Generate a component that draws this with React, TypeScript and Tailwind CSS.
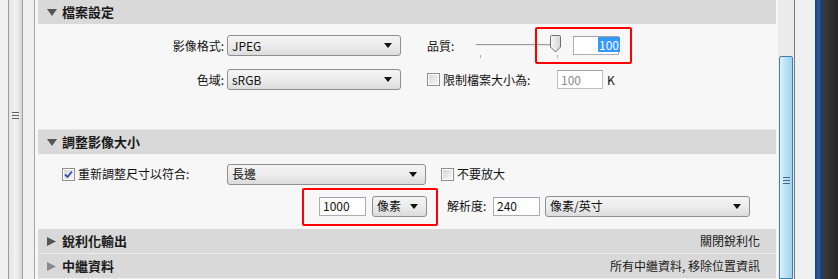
import React from "react";

const FONT = { fontFamily: '"Noto Sans CJK TC", "Noto Sans CJK SC", "Liberation Sans", sans-serif' };

function Select({ value, width }: { value: string; width: string }) {
  return (
    <div
      className={`${width} h-[21px] flex items-center justify-between rounded-[3px] border border-[#8e8f8f] bg-gradient-to-b from-[#f4f4f4] via-[#ececec] to-[#dcdcdc] pl-[4px] pr-[8px] text-[12px] text-[#111]`}
    >
      <span className="leading-none">{value}</span>
      <svg width="8" height="5" viewBox="0 0 8 5">
        <path d="M0 0 L8 0 L4 5 Z" fill="#111" />
      </svg>
    </div>
  );
}

function TextBox({ value, width, className = "" }: { value: string; width: string; className?: string }) {
  return (
    <div
      className={`${width} h-[19px] flex items-center border border-[#abadb3] border-t-[#a0a3aa] bg-white px-[3px] text-[12px] ${className}`}
    >
      {value}
    </div>
  );
}

function Check({ checked = false }: { checked?: boolean }) {
  return (
    <div className="w-[13px] h-[13px] border border-[#8e8f8f] bg-white p-[1px]">
      <div className="w-full h-full bg-gradient-to-br from-[#d8d8d8] to-[#f6f6f6] flex items-center justify-center">
        {checked && (
          <svg width="9" height="9" viewBox="0 0 9 9">
            <path d="M1 4.5 L3.5 7 L8 1.5" stroke="#2a52be" strokeWidth="1.8" fill="none" />
          </svg>
        )}
      </div>
    </div>
  );
}

function Header({ title, open, right, dim }: { title: string; open?: boolean; right?: string; dim?: boolean }) {
  const color = dim ? "#8a8a8a" : "#555555";
  return (
    <div className="h-[24px] bg-[#d9d9d9] flex items-center pl-[9px] pr-[16px] text-[#1a1a1a]">
      <span className="w-[11px] flex items-center">
        {open ? (
          <svg width="10" height="7" viewBox="0 0 10 7">
            <path d="M0 0 H10 L5 7 Z" fill={color} />
          </svg>
        ) : (
          <svg width="9" height="9" viewBox="0 0 9 9">
            <path d="M0 0 L9 4.5 L0 9 Z" fill={color} />
          </svg>
        )}
      </span>
      <span className="ml-[4px] text-[13px] font-bold">{title}</span>
      {right && <span className="ml-auto text-[12px]">{right}</span>}
    </div>
  );
}

function Slider() {
  return (
    <div className="relative w-[90px] h-[30px]">
      <div className="absolute left-[5px] top-[14px] w-[82px] h-[2px] border-t border-[#9a9a9a] border-b-[#ffffff] bg-[#e8e8e8]" />
      <div className="absolute left-[9px] top-[25px] w-px h-[3px] bg-[#b0b0b0]" />
      <div className="absolute left-[86px] top-[25px] w-px h-[3px] bg-[#b0b0b0]" />
      <svg className="absolute left-[79px] top-[5px]" width="11" height="18" viewBox="0 0 11 18">
        <defs>
          <linearGradient id="th" x1="0" x2="1">
            <stop offset="0" stopColor="#f8f8f8" />
            <stop offset="1" stopColor="#d4d4d4" />
          </linearGradient>
        </defs>
        <path d="M1.5 0.5 H9.5 Q10.5 0.5 10.5 1.5 V12 L5.5 17 L0.5 12 V1.5 Q0.5 0.5 1.5 0.5 Z" fill="url(#th)" stroke="#707070" />
      </svg>
    </div>
  );
}

export default function App() {
  return (
    <div className="w-[838px] h-[279px] overflow-hidden flex bg-[#f0f0f0] text-[#111]" style={FONT}>
      {/* left frame */}
      <div className="w-[8px] bg-[#f0f0f0]" />
      <div className="w-px bg-[#9d9d9d]" />
      <div className="w-[13px] bg-gradient-to-r from-[#e4e4e4] via-[#f2f2f2] to-[#d6d6d6] flex flex-col items-center pt-[112px] gap-[2px]">
        <div className="w-[7px] h-px bg-[#606060]" />
        <div className="w-[7px] h-px bg-[#606060]" />
        <div className="w-[7px] h-px bg-[#606060]" />
      </div>
      <div className="w-px bg-[#9d9d9d]" />
      <div className="w-[11px] bg-[#f0f0f0]" />
      <div className="w-px bg-[#a8a8a8]" />

      {/* main panel */}
      <div className="w-[743px] bg-[#f7f7f7] pl-[3px] pr-[2px] relative">
        <Header title="檔案設定" open />
        <div className="h-[105px] pt-[11px] flex flex-col gap-[13px]">
          <div className="flex items-center h-[21px]">
            <span className="w-[189px] text-right pr-[3px] text-[12px]">影像格式:</span>
            <Select value="JPEG" width="w-[174px]" />
            <span className="ml-[26px] w-[44px] text-[12px]">品質:</span>
            <div className="-mt-[2px]">
              <Slider />
            </div>
            <TextBox
              value=""
              width="w-[46px]"
              className="ml-[12px] justify-end border-[#7eb4ea] border-t-[#7eb4ea]"
            />
          </div>
          <div className="flex items-center h-[21px]">
            <span className="w-[189px] text-right pr-[3px] text-[12px]">色域:</span>
            <Select value="sRGB" width="w-[174px]" />
            <div className="ml-[26px] w-[130px] flex items-center gap-[3px]">
              <Check />
              <span className="text-[12px]">限制檔案大小為:</span>
            </div>
            <TextBox value="100" width="w-[46px]" className="text-[#8a8a8a] border-[#c0c0c0]" />
            <span className="ml-[4px] text-[12px]">K</span>
          </div>
        </div>

        <div className="h-px bg-[#e6e6e6]" />
        <Header title="調整影像大小" open />
        <div className="h-[75px] pt-[10px] flex flex-col gap-[12px]">
          <div className="flex items-center h-[20px]">
            <div className="ml-[24px] w-[165px] flex items-center gap-[3px]">
              <Check checked />
              <span className="text-[12px]">重新調整尺寸以符合:</span>
            </div>
            <Select value="長邊" width="w-[199px]" />
            <div className="ml-[15px] flex items-center gap-[3px]">
              <Check />
              <span className="text-[12px]">不要放大</span>
            </div>
          </div>
          <div className="flex items-center h-[20px]">
            <TextBox value="1000" width="w-[47px]" className="ml-[281px] border-[#a9c7e6]" />
            <Select value="像素" width="w-[55px] ml-[6px]" />
            <span className="ml-[20px] w-[46px] text-[12px]">解析度:</span>
            <TextBox value="240" width="w-[47px]" />
            <Select value="像素/英寸" width="w-[205px] ml-[5px]" />
          </div>
        </div>

        <Header title="銳利化輸出" right="關閉銳利化" />
        <div className="h-px bg-[#ededed]" />
        <Header title="中繼資料" right="所有中繼資料, 移除位置資訊" dim />
        <div className="h-px bg-[#ededed]" />

        {/* selection highlight on quality value */}
        <div className="absolute left-[563px] top-[37px] h-[15px] px-[1px] bg-[#3399ff] text-white text-[12px] leading-[15px]">
          100
        </div>

        {/* red annotation boxes */}
        <div className="absolute left-[500px] top-[27px] w-[97px] h-[37px] border-2 border-[#ff0000] rounded-[2px]" />
        <div className="absolute left-[267px] top-[188px] w-[136px] h-[38px] border-2 border-[#ff0000] rounded-[2px]" />
      </div>

      {/* right scrollbar */}
      <div className="w-[16px] bg-[#ececec] flex flex-col pl-[1px]">
        <div className="h-[56px]" />
        <div className="flex-1 w-[14px] rounded-t-[2px] border border-[#3c7fb1] bg-gradient-to-r from-[#dff2fc] via-[#b8e1f6] to-[#a4d4ef] flex flex-col items-center pt-[120px] gap-[2px]">
          <div className="w-[7px] h-px bg-[#3e6d8e]" />
          <div className="w-[7px] h-px bg-[#3e6d8e]" />
          <div className="w-[7px] h-px bg-[#3e6d8e]" />
        </div>
      </div>
      <div className="w-px bg-[#7a7a7a]" />
      <div className="w-[20px] bg-[#f0f0f0]" />
      <div className="w-[7px] bg-gradient-to-r from-[#1a3f7a] via-[#2c5aa8] to-[#163a72]" />
      <div className="flex-1 bg-gradient-to-r from-[#3c3c3c] to-[#262626]" />
    </div>
  );
}
